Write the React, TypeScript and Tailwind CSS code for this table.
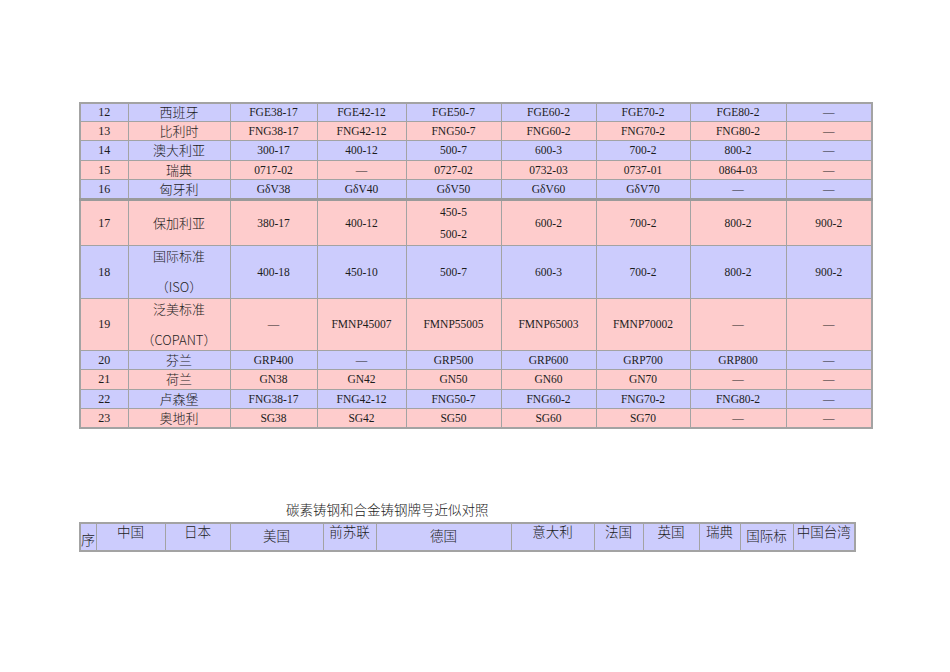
import React from 'react';

type Row = {
    no: string;
    country: React.ReactNode;
    cells: React.ReactNode[];
    tone: 'blue' | 'pink';
    h: string;
    thick?: boolean;
};

const dash = '—';

function Two({ a, b }: { a: string; b: string }) {
    return (
        <div className="flex flex-col items-center gap-[15px] leading-[16px]">
            <span>{a}</span>
            <span>{b}</span>
        </div>
    );
}

const rows: Row[] = [
    { no: '12', country: '西班牙', cells: ['FGE38-17', 'FGE42-12', 'FGE50-7', 'FGE60-2', 'FGE70-2', 'FGE80-2', dash], tone: 'blue', h: 'h-[18px]' },
    { no: '13', country: '比利时', cells: ['FNG38-17', 'FNG42-12', 'FNG50-7', 'FNG60-2', 'FNG70-2', 'FNG80-2', dash], tone: 'pink', h: 'h-[19px]' },
    { no: '14', country: '澳大利亚', cells: ['300-17', '400-12', '500-7', '600-3', '700-2', '800-2', dash], tone: 'blue', h: 'h-[20px]' },
    { no: '15', country: '瑞典', cells: ['0717-02', dash, '0727-02', '0732-03', '0737-01', '0864-03', dash], tone: 'pink', h: 'h-[19px]' },
    { no: '16', country: '匈牙利', cells: ['GδV38', 'GδV40', 'GδV50', 'GδV60', 'GδV70', dash, dash], tone: 'blue', h: 'h-[20px]' },
    {
        no: '17', country: '保加利亚',
        cells: ['380-17', '400-12', <div key="x" className="flex flex-col items-center leading-[22px]"><span>450-5</span><span>500-2</span></div>, '600-2', '700-2', '800-2', '900-2'],
        tone: 'pink', h: 'h-[45px]', thick: true,
    },
    { no: '18', country: <Two a="国际标准" b="（ISO）" />, cells: ['400-18', '450-10', '500-7', '600-3', '700-2', '800-2', '900-2'], tone: 'blue', h: 'h-[53px]' },
    { no: '19', country: <Two a="泛美标准" b="（COPANT）" />, cells: [dash, 'FMNP45007', 'FMNP55005', 'FMNP65003', 'FMNP70002', dash, dash], tone: 'pink', h: 'h-[52px]' },
    { no: '20', country: '芬兰', cells: ['GRP400', dash, 'GRP500', 'GRP600', 'GRP700', 'GRP800', dash], tone: 'blue', h: 'h-[19px]' },
    { no: '21', country: '荷兰', cells: ['GN38', 'GN42', 'GN50', 'GN60', 'GN70', dash, dash], tone: 'pink', h: 'h-[20px]' },
    { no: '22', country: '卢森堡', cells: ['FNG38-17', 'FNG42-12', 'FNG50-7', 'FNG60-2', 'FNG70-2', 'FNG80-2', dash], tone: 'blue', h: 'h-[19px]' },
    { no: '23', country: '奥地利', cells: ['SG38', 'SG42', 'SG50', 'SG60', 'SG70', dash, dash], tone: 'pink', h: 'h-[20px]' },
];

const widths = ['w-[48px]', 'w-[102px]', 'w-[87px]', 'w-[89px]', 'w-[95px]', 'w-[95px]', 'w-[94px]', 'w-[96px]', 'w-[86px]'];

const headers: { label: string; w: string; low?: boolean }[] = [
    { label: '中国', w: 'w-[69px]' },
    { label: '日本', w: 'w-[65px]' },
    { label: '美国', w: 'w-[93px]', low: true },
    { label: '前苏联', w: 'w-[53px]' },
    { label: '德国', w: 'w-[135px]', low: true },
    { label: '意大利', w: 'w-[83px]' },
    { label: '法国', w: 'w-[49px]' },
    { label: '英国', w: 'w-[56px]' },
    { label: '瑞典', w: 'w-[41px]' },
    { label: '国际标', w: 'w-[53px]', low: true },
    { label: '中国台湾', w: 'w-[62px]' },
];

export default function App() {
    return (
        <div className="min-h-screen w-full bg-white text-[#1c1c1c] font-['Liberation_Serif','Noto_Sans_CJK_SC',serif] pt-[102px] pl-[79px]">
            <table className="table-fixed border-collapse w-[792px] border-2 border-[#a3a3a3]">
                <colgroup>
                    {widths.map((w, i) => <col key={i} className={w} />)}
                </colgroup>
                <tbody>
                    {rows.map((r) => (
                        <tr
                            key={r.no}
                            className={`${r.tone === 'blue' ? 'bg-[#ccccfd]' : 'bg-[#fecccc]'} ${r.thick ? 'border-t-[3px] border-t-[#9a9a9a]' : ''}`}
                        >
                            <td className={`${r.h} border border-[#a3a3a3] text-center align-middle text-[12px] leading-[16px] p-0`}>{r.no}</td>
                            <td className={`border border-[#a3a3a3] text-center align-middle text-[13px] leading-[16px] p-0 font-['Noto_Sans_CJK_SC',sans-serif] font-light`}>
                                {r.country}
                            </td>
                            {r.cells.map((c, i) => (
                                <td key={i} className="border border-[#a3a3a3] text-center align-middle text-[11.5px] leading-[16px] p-0">
                                    {c}
                                </td>
                            ))}
                        </tr>
                    ))}
                </tbody>
            </table>

            <p className="mt-[72px] pl-[207px] text-[13.5px] leading-[16px] font-['Noto_Sans_CJK_SC',sans-serif] font-light text-[#222]">
                碳素铸钢和合金铸钢牌号近似对照
            </p>

            <table className="table-fixed border-collapse w-[775px] mt-[5px] border-2 border-[#a3a3a3] bg-[#ccccfd] font-['Noto_Sans_CJK_SC',sans-serif] font-light">
                <colgroup>
                    <col className="w-[16px]" />
                    {headers.map((h) => <col key={h.label} className={h.w} />)}
                </colgroup>
                <tbody>
                    <tr>
                        <td className="h-[28px] border border-[#a3a3a3] p-0 pt-[3px] text-left text-[14px] leading-[16px] align-middle">序</td>
                        {headers.map((h) => (
                            <td
                                key={h.label}
                                className={`border border-[#a3a3a3] p-0 text-center text-[13.5px] leading-[14px] align-top ${h.low ? 'pt-[4px]' : 'pt-0'}`}
                            >
                                {h.label}
                            </td>
                        ))}
                    </tr>
                </tbody>
            </table>
        </div>
    );
}
